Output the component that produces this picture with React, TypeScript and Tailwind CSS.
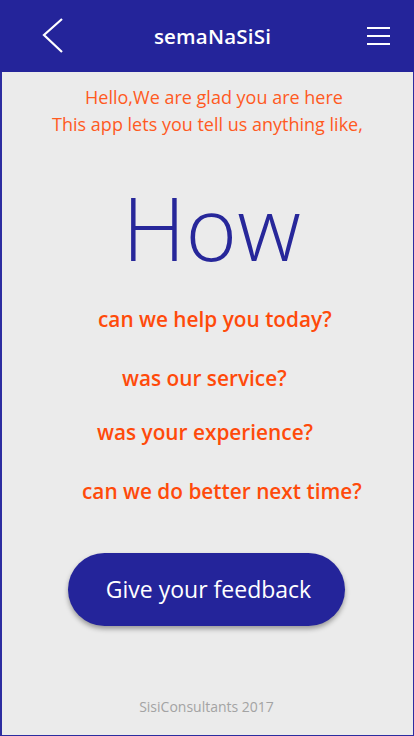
import React from 'react';

const questions = [
  { text: "can we help you today?", pad: "pl-[96px]", gap: "mt-[0px]" },
  { text: "was our service?", pad: "pl-[120px]", gap: "mt-[31px]" },
  { text: "was your experience?", pad: "pl-[95px]", gap: "mt-[26px]" },
  { text: "can we do better next time?", pad: "pl-[80px]", gap: "mt-[31px]" },
];

const App = () => {
  return (
    <div className="w-[414px] h-[736px] flex flex-col bg-[#ebebeb] font-['Open_Sans',sans-serif]">
      {/* Top bar */}
      <header className="h-[72px] bg-[#24249a] grid grid-cols-[72px_1fr_72px] items-center shrink-0">
        <button className="h-[72px] flex items-center pl-[41px]">
          <svg width="24" height="38" viewBox="0 0 24 38" fill="none">
            <path d="M21 2 L3 18 L21 35" stroke="white" strokeWidth="2.2" />
          </svg>
        </button>
        <h1 className="text-white text-[20.5px] font-semibold tracking-[0.2px] text-center pl-[11px]">semaNaSiSi</h1>
        <button className="h-[72px] flex flex-col items-start justify-center gap-[6px] pl-[25px]">
          <span className="block w-[23px] h-[2px] bg-white" />
          <span className="block w-[23px] h-[2px] bg-white" />
          <span className="block w-[23px] h-[2px] bg-white" />
        </button>
      </header>

      {/* Body */}
      <main className="flex-1 flex flex-col border-l-2 border-r border-b border-[#2c2ca0]">
        <div className="mt-[12px] flex flex-col items-center text-[#ff5a1f] text-[18px] leading-[27px]">
          <p className="pl-[13px]">Hello,We are glad you are here</p>
          <p className="pl-[0px]">This app lets you tell us anything like,</p>
        </div>

        <div className="mt-[39px] flex justify-center">
          <span className="text-[#27279a] text-[88px] font-light leading-[100px] pl-[8px]">How</span>
        </div>

        <div className="mt-[28px] flex flex-col text-[#ff4a0a] text-[20.8px] font-semibold leading-[28px]">
          {questions.map((q, i) => (
            <p key={i} className={`${q.pad} ${q.gap}`}>{q.text}</p>
          ))}
        </div>

        <div className="mt-[48px] flex">
          <button className="ml-[66px] w-[277px] h-[73px] rounded-full bg-[#24249a] text-white text-[23px] pl-[4px] shadow-[0_3px_5px_rgba(0,0,0,0.35)]">
            Give your feedback
          </button>
        </div>

        <footer className="mt-auto mb-[18px] text-center text-[#a3a3a3] text-[14px] pr-[2px]">
          SisiConsultants 2017
        </footer>
      </main>
    </div>
  );
};

export default App;
